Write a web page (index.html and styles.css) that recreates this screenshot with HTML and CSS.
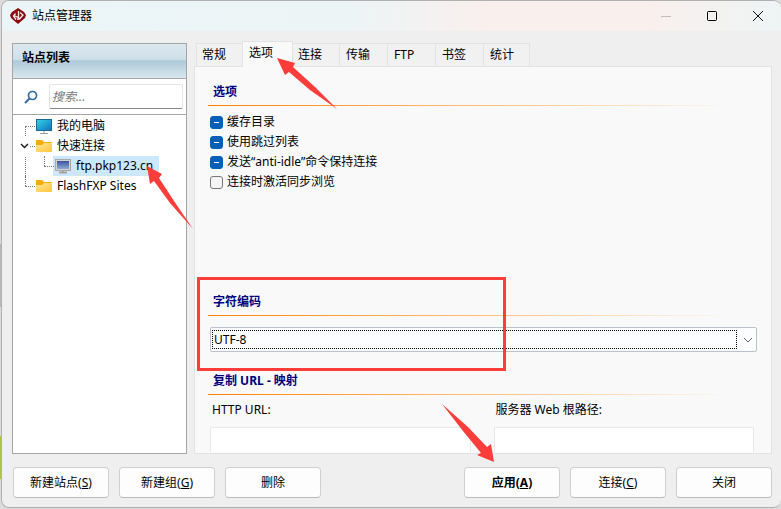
FILE: index.html
```html
<!DOCTYPE html>
<html lang="zh-CN">
<head>
    <meta charset="UTF-8">
    <meta name="viewport" content="width=device-width, initial-scale=1.0">
    <title>站点管理器</title>
    <link rel="stylesheet" href="styles.css">
</head>
<body>
    <div class="window">
        <header class="titlebar">
            <svg class="logo" width="16" height="16" viewBox="0 0 16 16">
                <path d="M8 0 14 4 16 7 15 10 8 16 1 10 0 7 2 4Z" fill="#8c0a10"/>
                <path d="M8.500 3v6.500L4 7.500M5.500 5.500 3.500 8l2.500 3.500M10 4.500l3 2.500-3.500 4H7" fill="none" stroke="#f3eded" stroke-width="1.300"/>
            </svg>
            <h1>站点管理器</h1>
            <div class="window-controls">
                <button type="button" aria-label="最小化" disabled>
                    <svg width="12" height="12" viewBox="0 0 12 12"><path d="M1 6.500h10" stroke="#c0bcbc"/></svg>
                </button>
                <button type="button" aria-label="最大化">
                    <svg width="12" height="12" viewBox="0 0 12 12"><rect x="1.500" y="1.500" width="9" height="9" rx="1" fill="none" stroke="#000"/></svg>
                </button>
                <button type="button" aria-label="关闭窗口">
                    <svg width="12" height="12" viewBox="0 0 12 12"><path d="M1 1l10 10M11 1L1 11" stroke="#111"/></svg>
                </button>
            </div>
        </header>

        <main class="content">
            <aside class="sites">
                <h2>站点列表</h2>
                <div class="search">
                    <label for="search" aria-label="搜索">
                        <svg width="14" height="14" viewBox="0 0 14 14" fill="none" stroke="#336ca5">
                            <circle cx="8.500" cy="5.500" r="4" stroke-width="1.700"/>
                            <path d="M5.500 8.500L1 13" stroke-width="2"/>
                        </svg>
                    </label>
                    <input type="text" id="search" placeholder="搜索...">
                </div>
                <ul class="tree">
                    <li>
                        <div class="node">
                            <svg class="icon" width="16" height="16" viewBox="0 0 16 16">
                                <defs><linearGradient id="screen" x2="1" y2="1"><stop stop-color="#35d5e6"/><stop offset="1" stop-color="#1270be"/></linearGradient></defs>
                                <rect x=".5" y="1.500" width="15" height="11" fill="url(#screen)" stroke="#176b94"/>
                                <path d="M8 13v2M4 15.500h8" stroke="#9aa3aa"/>
                            </svg>
                            <span>我的电脑</span>
                        </div>
                    </li>
                    <li>
                        <div class="node">
                            <svg class="chevron" width="9" height="7" viewBox="0 0 9 7"><path d="M1 1.500l3.500 3.500L8 1.500" fill="none" stroke="#222" stroke-width="1.500"/></svg>
                            <svg class="icon" width="16" height="16" viewBox="0 0 16 16">
                                <defs><linearGradient id="folder" x2="1" y2="1"><stop stop-color="#ffe59a"/><stop offset="1" stop-color="#ffc53a"/></linearGradient></defs>
                                <path d="M0 3q0-1 1-1h5l2 2h7q1 0 1 1v8H0z" fill="#f2ad08"/>
                                <path d="M0 7h6l2-2h8v8q0 1-1 1H1q-1 0-1-1z" fill="url(#folder)"/>
                            </svg>
                            <span>快速连接</span>
                        </div>
                        <ul>
                            <li>
                                <div class="node selected">
                                    <svg class="icon" width="16" height="16" viewBox="0 0 16 16">
                                        <defs><linearGradient id="monitor" x2="0" y2="1"><stop stop-color="#3d50a0"/><stop offset="1" stop-color="#8dacd8"/></linearGradient></defs>
                                        <rect x=".5" y="1.500" width="15" height="11" fill="#d5d2cf" stroke="#aaa7a5"/>
                                        <rect x="2" y="3" width="12" height="8" fill="url(#monitor)"/>
                                        <path d="M8 13v1M4 14.500h8" stroke="#aaa39a" stroke-width="2"/>
                                    </svg>
                                    <span>ftp.pkp123.cn</span>
                                </div>
                            </li>
                        </ul>
                    </li>
                    <li>
                        <div class="node">
                            <svg class="icon" width="16" height="16" viewBox="0 0 16 16">
                                <path d="M0 3q0-1 1-1h5l2 2h7q1 0 1 1v8H0z" fill="#f2ad08"/>
                                <path d="M0 7h6l2-2h8v8q0 1-1 1H1q-1 0-1-1z" fill="url(#folder)"/>
                            </svg>
                            <span>FlashFXP Sites</span>
                        </div>
                    </li>
                </ul>
            </aside>

            <section class="settings">
                <div class="tabs" role="tablist">
                    <button type="button" role="tab">常规</button>
                    <button type="button" role="tab" class="active" aria-selected="true">选项</button>
                    <button type="button" role="tab">连接</button>
                    <button type="button" role="tab">传输</button>
                    <button type="button" role="tab">FTP</button>
                    <button type="button" role="tab">书签</button>
                    <button type="button" role="tab">统计</button>
                </div>
                <form class="panel" id="siteForm">
                    <section class="options">
                        <h3>选项</h3>
                        <label class="check"><input type="checkbox" class="mixed">缓存目录</label>
                        <label class="check"><input type="checkbox" class="mixed">使用跳过列表</label>
                        <label class="check"><input type="checkbox" class="mixed">发送“anti-idle”命令保持连接</label>
                        <label class="check"><input type="checkbox">连接时激活同步浏览</label>
                    </section>
                    <section class="encoding">
                        <h3 id="encodingLabel">字符编码</h3>
                        <div class="combo">
                            <select aria-labelledby="encodingLabel">
                                <option>UTF-8</option>
                            </select>
                            <svg width="10" height="6" viewBox="0 0 10 6"><path d="M1 1l4 4 4-4" fill="none" stroke="#666"/></svg>
                        </div>
                    </section>
                    <section class="mapping">
                        <h3>复制 URL - 映射</h3>
                        <div class="fields">
                            <div class="field">
                                <label for="httpUrl">HTTP URL:</label>
                                <input type="text" id="httpUrl">
                            </div>
                            <div class="field">
                                <label for="webRoot">服务器 Web 根路径:</label>
                                <input type="text" id="webRoot">
                            </div>
                        </div>
                    </section>
                </form>
            </section>
        </main>

        <footer class="actions">
            <button type="button">新建站点(<u>S</u>)</button>
            <button type="button">新建组(<u>G</u>)</button>
            <button type="button">删除</button>
            <button type="submit" form="siteForm" class="primary">应用(<u>A</u>)</button>
            <button type="button">连接(<u>C</u>)</button>
            <button type="button">关闭</button>
        </footer>
    </div>

    <!-- Walkthrough marks drawn over the window -->
    <svg class="marks" width="781" height="509" viewBox="0 0 781 509" aria-hidden="true">
        <rect x="198.500" y="278.500" width="306" height="91" fill="none" stroke="#fc3d39" stroke-width="3"/>
        <path d="M277 58 295 63 293 67 315 87 337 109 310 90 289 72 285 75Z"/>
        <path d="M147 166 162 174 159 178 174 201 193 229 170 203 154 181 150 184Z"/>
        <path d="M494 462 491 444 487 447 468 427 442 404 463 431 481 453 477 455Z"/>
    </svg>

    <script>
        document.querySelectorAll('.mixed').forEach((box) => {
            box.indeterminate = true;
        });
    </script>
</body>
</html>
```
FILE: styles.css
```css
:root {
  --window-color: #efefef;
  --panel-color: #f9f9f9;
  --line-color: #e3e3e3;
  --frame-color: #a5a5a8;
  --heading-color: #00007f;
  --accent-color: #005fb8;
  --mark-color: #fc3d39;
}

* {
  box-sizing: border-box;
}

body {
  display: flex;
  min-height: 100vh;
  margin: 0;
  padding: 0 0 1px 1px;
  background:
    linear-gradient(#b7b7b7, #b7b7b7) 0 244px / 2px 63px no-repeat,
    linear-gradient(#a9c83c, #a9c83c) 0 436px / 2px 43px no-repeat,
    #dcdcdc;
  color: #000;
  font-family: "Noto Sans", "Noto Sans CJK SC", sans-serif;
  font-size: 12px;
  line-height: 20px;
}

h1,
h2,
h3,
ul {
  margin: 0;
  padding: 0;
  font-size: 12px;
}

ul {
  list-style: none;
}

button,
input,
select {
  font: inherit;
  color: inherit;
}

.window {
  flex: 1;
  display: flex;
  flex-direction: column;
  border: 1px solid #b0b0b0;
  border-right-width: 0;
  border-radius: 8px;
  background-color: var(--window-color);
  overflow: hidden;
}

.titlebar {
  display: flex;
  align-items: center;
  height: 30px;
  padding-left: 8px;
  background: linear-gradient(90deg, #ebf5f8, #edf4f6 45%, #f9efed 63%, #f9efed 82%, #eef4f4);
}

.titlebar h1 {
  flex: 1;
  margin-left: 6px;
  font-weight: 400;
}

.window-controls {
  display: flex;
}

.window-controls button {
  display: flex;
  align-items: center;
  justify-content: center;
  width: 46px;
  height: 28px;
  padding: 0;
  border: none;
  background: none;
}

.content {
  flex: 1;
  display: flex;
  gap: 7px;
  padding: 12px 9px 0 10px;
}

.sites {
  flex: none;
  width: 175px;
  border: 1px solid var(--frame-color);
  background-color: #fff;
}

.sites h2 {
  height: 35px;
  padding: 4px 9px;
  border-bottom: 1px solid var(--frame-color);
  background: linear-gradient(#dce8f0, #cfe0ea 45%, #adcadb 50%, #dae7ee);
}

.search {
  display: flex;
  align-items: center;
  gap: 11px;
  height: 36px;
  padding: 0 3px 0 11px;
  border-bottom: 1px solid var(--frame-color);
}

.search label {
  display: flex;
}

.search input {
  flex: 1;
  min-width: 0;
  height: 25px;
  padding: 0 2px;
  border: 1px solid #e5e5e5;
  border-bottom-color: #868686;
  border-radius: 2px;
}

.search input::placeholder {
  color: #777;
  font-style: italic;
}

/* Tree: dotted guides in front of the items */
.tree {
  padding: 1px 0 0 12px;
}

.tree li {
  position: relative;
}

.tree li::before {
  content: "";
  position: absolute;
  top: 0;
  bottom: 0;
  left: 0;
  border-left: 1px dotted #777;
}

.tree > li:first-child::before {
  top: 10px;
}

.tree li:last-child::before {
  bottom: auto;
  height: 10px;
}

.node {
  display: flex;
  align-items: center;
  gap: 5px;
  height: 20px;
}

.node::before {
  content: "";
  width: 10px;
  margin-right: -4px;
  border-top: 1px dotted #777;
}

.node .chevron {
  position: absolute;
  top: 0;
  left: -6px;
  width: 11px;
  height: 20px;
  padding: 0 1px;
  background-color: #fff;
}

.tree ul {
  padding-left: 19px;
}

.node.selected {
  width: max-content;
  padding-right: 6px;
  background: linear-gradient(#cce8ff, #cce8ff) 9px 0 no-repeat;
}

.settings {
  flex: 1;
  min-width: 0;
  display: flex;
  flex-direction: column;
}

/* The active tab covers the top edge of the panel */
.tabs {
  position: relative;
  display: flex;
  align-items: flex-end;
  height: 23px;
  padding-left: 2px;
}

.tabs button {
  width: 48px;
  height: 23px;
  padding: 0 6px;
  border: 1px solid var(--line-color);
  border-width: 1px 0 0 1px;
  background-color: #f1f1f2;
  text-align: left;
}

.tabs button:first-child {
  width: 46px;
  padding-left: 5px;
}

.tabs button:last-child {
  width: 47px;
  border-right-width: 1px;
}

.tabs .active {
  width: 51px;
  height: 26px;
  margin-bottom: -1px;
  padding-bottom: 3px;
  border-width: 1px 1px 0;
  background-color: var(--panel-color);
}

.tabs .active + button {
  width: 46px;
  padding-left: 5px;
  border-left: none;
}

.panel {
  flex: 1;
  display: flex;
  flex-direction: column;
  padding: 15px 14px 0 13px;
  border: 1px solid var(--line-color);
  background-color: var(--panel-color);
}

.panel h3 {
  height: 24px;
  margin-right: 26px;
  padding-left: 5px;
  border-bottom: 1px solid;
  border-image: linear-gradient(90deg, #ff8000, #ffc17f 55%, #f9f9f9) 1;
  color: var(--heading-color);
}

.options {
  height: 210px;
}

.check {
  display: flex;
  align-items: center;
  gap: 4px;
  width: max-content;
  margin-left: 2px;
}

.options h3 {
  margin-bottom: 6px;
}

.check input {
  appearance: none;
  width: 13px;
  height: 13px;
  margin: 0;
  border: 1px solid #777;
  border-radius: 3px;
  background-color: #f5f5f5;
}

.check input:indeterminate {
  border-color: var(--accent-color);
  background: linear-gradient(#fff, #fff) center / 5px 1px no-repeat var(--accent-color);
}

.encoding {
  height: 79px;
}

.combo {
  position: relative;
  margin: 11px 0 0 2px;
}

.combo select {
  appearance: none;
  display: block;
  width: 100%;
  height: 25px;
  padding: 0 24px 0 3px;
  border: 1px solid #bcc2cb;
  border-radius: 2px;
  background-color: #fcfdff;
}

/* Focus rectangle around the value */
.combo::after {
  content: "";
  position: absolute;
  inset: 3px 20px 3px 2px;
  border: 1px dotted #000;
  pointer-events: none;
}

.combo svg {
  position: absolute;
  top: 10px;
  right: 4px;
  pointer-events: none;
}

.fields {
  display: grid;
  grid-template-columns: 1fr 1fr;
  gap: 23px;
  margin: 5px 3px 0 2px;
}

.field label {
  display: block;
  margin: 0 0 7px 2px;
}

.field input {
  display: block;
  width: 100%;
  height: 25px;
  border: 1px solid #e8e8e8;
  border-bottom: none;
  border-radius: 2px 2px 0 0;
  background-color: #fff;
}

.actions {
  display: flex;
  gap: 10px;
  padding: 13px 9px 9px 11px;
}

.actions button {
  width: 96px;
  height: 31px;
  padding: 0;
  border: 1px solid #d0d0d0;
  border-bottom-color: #bababa;
  border-radius: 4px;
  background-color: #fdfdfd;
}

.actions .primary {
  margin-left: auto;
  font-weight: 700;
}

.marks {
  position: absolute;
  z-index: 2;
  top: 0;
  left: 0;
  fill: var(--mark-color);
  pointer-events: none;
}
```
